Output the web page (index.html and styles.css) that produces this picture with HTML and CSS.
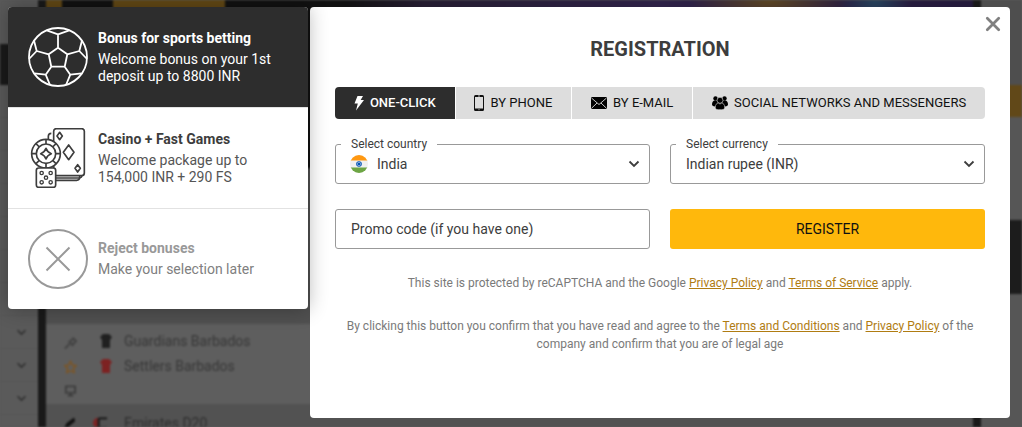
FILE: index.html
```html
<!DOCTYPE html>
<html lang="en">
<head>
<meta charset="utf-8">
<title>Registration</title>
<link rel="stylesheet" href="styles.css">
</head>
<body>
<svg class="sprite" aria-hidden="true">
  <symbol id="chevron" viewBox="0 0 12 8"><path d="M1.500 1.500 6 6l4.500-4.500" fill="none" stroke="currentColor" stroke-width="1.800"/></symbol>
  <symbol id="shirt" viewBox="0 0 12 16"><path d="M3 1h6l3 3-2 3v8H2V7L0 4z" fill="currentColor"/></symbol>
</svg>

<div class="page" aria-hidden="true">
  <div class="page-menu">
    <div class="menu-head"></div>
    <div class="menu-band"></div>
    <div class="menu-row"></div><div class="menu-row"></div><div class="menu-row"></div>
    <div class="menu-row"></div><div class="menu-row"></div><div class="menu-row"></div>
    <div class="menu-row"></div>
    <div class="menu-row"><svg><use href="#chevron"/></svg></div>
    <div class="menu-row"><svg><use href="#chevron"/></svg></div>
    <div class="menu-row"><svg><use href="#chevron"/></svg></div>
    <div class="menu-row"></div>
  </div>
  <div class="page-main">
    <div class="banner">
      <div class="banner-tag"></div>
      <div class="banner-button"></div>
      <div class="banner-art"></div>
    </div>
    <div class="league"></div>
    <div class="match">
      <div class="match-tools">
        <svg viewBox="0 0 14 14"><path d="M1 13l5-5M5 5l5 5M6 6l4-4 3 3-4 4" fill="none" stroke="#404040" stroke-width="2"/></svg>
        <svg viewBox="0 0 14 14"><path d="M7 1l2 4 4 .500-3 3 1 4.500-4-2-4 2 1-4.500-3-3L5 5z" fill="none" stroke="#80551f" stroke-width="1.500"/></svg>
        <svg viewBox="0 0 14 14"><path d="M2 2h10v7H2zM7 9v3M4 12h6" fill="none" stroke="#333" stroke-width="1.500"/></svg>
      </div>
      <div class="teams">
        <div class="team"><svg class="shirt-dark"><use href="#shirt"/></svg>Guardians Barbados</div>
        <div class="team"><svg class="shirt-red"><use href="#shirt"/></svg>Settlers Barbados</div>
      </div>
    </div>
    <div class="league-next">
      <svg viewBox="0 0 16 14"><path d="M1 14l4-7 8-6 1 4-7 6z" fill="#111"/></svg>
      <svg viewBox="0 0 16 14"><path d="M5 1v12Q0 11 0 7t5-6z" fill="#7d2222"/><path d="M6 2h9M6 2v10h9" stroke="#111" stroke-width="2" fill="none"/></svg>
      Emirates D20
    </div>
  </div>
  <div class="page-side">
    <div class="side-top"></div>
    <div class="side-button"></div>
    <div class="side-text"></div>
    <div class="side-band"></div>
  </div>
</div>

<div class="modal">
  <div class="bonuses">
    <button type="button" class="bonus bonus-active">
      <svg class="bonus-icon" viewBox="0 0 60 60" fill="none" stroke="#fff" stroke-width="1.800" stroke-linejoin="round">
        <circle cx="30" cy="30" r="29"/>
        <path d="M30 20.700l9.300 6.600-2.600 12.400H23.300l-2.600-12.400zM30 20.700V7.300M18.700 3.300 30 7.300l11.300-4M20.700 27.300 8.700 24M6 13.500 8.700 24l-7.700 8M39.300 27.300l12-3.300M54 13.500 51.300 24l7.700 8M23.300 39.700l-5.600 8M6.300 46.300l11.400 1.400L22 58M36.700 39.700l5.600 8M53.700 46.300l-11.400 1.400L38 58"/>
      </svg>
      <span class="bonus-text"><strong>Bonus for sports betting</strong><span>Welcome bonus on your 1st deposit up to 8800 INR</span></span>
    </button>
    <button type="button" class="bonus">
      <svg class="bonus-icon" viewBox="84 69 180 180" fill="#fff" stroke="#3d3d3d" stroke-width="5" stroke-linejoin="round">
        <path d="M154 85q-9 0-9 9v123q0 9 9 9h76q9 0 9-9v-6"/>
        <path d="M150 212v7h88q8 0 8-8" fill="none" stroke-width="4"/>
        <rect x="161" y="71" width="92" height="141" rx="8"/>
        <path d="M206 120l16 22-16 22-16-22zM179 82l8 11-8 11-8-11zM233 179l8 11-8 11-8-11z"/>
        <circle cx="138" cy="146" r="43"/>
        <circle cx="138" cy="146" r="29"/>
        <path d="M138 130q4 12 16 16-12 4-16 16-4-12-16-16 12-4 16-16zM138 103v14M138 175v14M95 146h14M167 146h14M108 116l10 10M158 166l10 10M108 176l10-10M158 126l10-10"/>
        <rect x="109" y="189" width="58" height="58" rx="7"/>
        <g stroke-width="4"><circle cx="125" cy="204" r="5"/><circle cx="152" cy="204" r="5"/><circle cx="138" cy="218" r="5"/><circle cx="125" cy="232" r="5"/><circle cx="152" cy="232" r="5"/></g>
      </svg>
      <span class="bonus-text"><strong>Casino + Fast Games</strong><span>Welcome package up to 154,000 INR + 290 FS</span></span>
    </button>
    <button type="button" class="bonus bonus-reject">
      <svg class="bonus-icon" viewBox="0 0 60 60" fill="none" stroke="#999" stroke-width="2">
        <circle cx="30" cy="30" r="29"/><path d="M18.500 18.500l23 23M41.500 18.500l-23 23"/>
      </svg>
      <span class="bonus-text"><strong>Reject bonuses</strong><span>Make your selection later</span></span>
    </button>
  </div>

  <form class="dialog">
    <button type="button" class="close" aria-label="Close"><svg viewBox="0 0 14 14"><path d="M2 2l10 10M12 2 2 12" stroke="#808080" stroke-width="2.400" stroke-linecap="round"/></svg></button>
    <h1>REGISTRATION</h1>
    <div class="tabs">
      <button type="button" class="tab tab-active">
        <svg width="10" height="16" viewBox="0 0 10 16"><path d="M3.500 1H9L6.700 5H10L2 15.500 3.800 8.500H.500z" fill="currentColor"/></svg>
        <span>ONE-CLICK</span></button>
      <button type="button" class="tab">
        <svg width="10" height="16" viewBox="0 0 10 16"><rect width="10" height="16" rx="1.500" fill="#111"/><path d="M1 2h8v11.500H1z" fill="#ddd"/><path d="M4 1h2M4.500 14.700h1" stroke="#ddd" stroke-width=".800"/></svg>
        <span>BY PHONE</span></button>
      <button type="button" class="tab">
        <svg width="16" height="12" viewBox="0 0 16 12"><rect width="16" height="12" rx="1" fill="#000"/><path d="M.500 1 8 7.500 15.500 1M.500 11.300 6 6M15.500 11.300 10 6" fill="none" stroke="#ddd" stroke-width=".900"/></svg>
        <span>BY E-MAIL</span></button>
      <button type="button" class="tab">
        <svg width="16" height="14" viewBox="0 0 16 14"><circle cx="3.500" cy="2.500" r="2.200"/><circle cx="12.500" cy="2.500" r="2.200"/><path d="M0 8.500C0 6 1.300 4.600 3 4.600h10c1.700 0 3 1.400 3 3.900 0 1.300-1.500 1.900-3 1.900H3c-1.500 0-3-.600-3-1.900z"/><g stroke="#ddd" stroke-width=".600"><circle cx="8" cy="4.300" r="3"/><path d="M3.300 11.500c0-2.800 1.300-4.400 3-4.400L8 8l1.700-.900c1.700 0 3 1.600 3 4.400 0 1.500-1.500 2.200-3 2.200H6.300c-1.500 0-3-.700-3-2.200z"/></g></svg>
        <span>SOCIAL NETWORKS AND MESSENGERS</span></button>
    </div>

    <div class="fields">
      <div class="field">
        <label for="country">Select country</label>
        <svg class="flag" viewBox="0 0 18 18"><clipPath id="round"><circle cx="9" cy="9" r="9"/></clipPath><g clip-path="url(#round)"><path d="M0 0h18v18H0z" fill="#f0f0f0"/><path d="M0 0h18v5.500H0z" fill="#ff9811"/><path d="M0 12.500h18V18H0z" fill="#6da544"/></g><circle cx="9" cy="9" r="2.800" fill="#0052b4"/><circle cx="9" cy="9" r="1.900" fill="#a9c4e5"/><circle cx="9" cy="9" r="1.300" fill="#0052b4"/></svg>
        <select id="country" class="with-flag"><option>India</option></select>
        <svg class="arrow"><use href="#chevron"/></svg>
      </div>
      <div class="field">
        <label for="currency">Select currency</label>
        <select id="currency"><option>Indian rupee (INR)</option></select>
        <svg class="arrow"><use href="#chevron"/></svg>
      </div>
      <div class="field"><input type="text" aria-label="Promo code" placeholder="Promo code (if you have one)"></div>
      <button type="submit" class="register">REGISTER</button>
    </div>

    <p class="note">This site is protected by reCAPTCHA and the Google <a href="#privacy">Privacy Policy</a> and <a href="#service">Terms of Service</a> apply.</p>
    <p class="note">By clicking this button you confirm that you have read and agree to the <a href="#terms">Terms and Conditions</a> and <a href="#company-privacy">Privacy Policy</a> of the company and confirm that you are of legal age</p>
  </form>
</div>
</body>
</html>
```
FILE: styles.css
```css
* { box-sizing: border-box; }
body {
  margin: 0;
  min-height: 100vh;
  overflow: hidden;
  background: #5a5a5a;
  color: #3d3d3d;
  font: 14px/18px Roboto, "Liberation Sans", sans-serif;
}
button, input, select { font: inherit; color: inherit; }
button { border: 0; padding: 0; background: none; cursor: pointer; }
.sprite { display: none; }

/* Dimmed page under the dialogs */
.page {
  position: absolute;
  inset: 0;
  display: flex;
  gap: 8px;
  overflow: hidden;
  background: #191919;
  filter: blur(1px);
}
.page-menu { flex: 0 0 38px; background: #5a5a5a; }
.menu-head { height: 44px; }
.menu-band { height: 41px; background: #1a1a1a; }
.menu-row { display: flex; align-items: center; justify-content: flex-end; height: 33px; padding-right: 11px; border-bottom: 1px solid #555; }
.menu-row svg { width: 11px; height: 7px; color: #2c2c2c; }
.page-main { flex: 1; display: flex; flex-direction: column; background: #505050; }
.page-main > div { flex: none; }
.banner { display: flex; height: 168px; background: #111; }
.banner-tag { width: 16px; height: 24px; background: #634915; }
.banner-button { width: 112px; height: 24px; margin-left: 51px; background: #634915; }
.banner-art { flex: 1; margin-left: 120px; background: radial-gradient(circle at 530px 0, #25415a, transparent 36px), radial-gradient(ellipse at 425px 0, #5a4420, transparent 80px), linear-gradient(90deg, #111, #241c30 80px, #2d2146 50%, #241a3b); }
.league { height: 156px; background: #505050; }
.match { display: flex; gap: 32px; height: 80px; padding: 4px 18px; background: #5e5e5e; }
.match-tools { display: flex; flex-direction: column; gap: 10px; width: 14px; padding-top: 8px; }
.match-tools svg { flex: none; width: 13px; height: 14px; }
.teams { color: #373737; }
.team { display: flex; align-items: center; gap: 12px; height: 25px; padding-left: 4px; }
.teams { margin-left: -16px; padding-left: 2px; }
.team svg { width: 12px; height: 16px; }
.shirt-dark { color: #202020; }
.shirt-red { color: #7d2222; }
.league-next { display: flex; align-items: center; gap: 16px; height: 38px; padding-left: 16px; background: #525252; color: #2e2e2e; }
.league-next svg { width: 15px; height: 14px; }
.page-side { flex: 0 0 41px; background: #565656; }
.side-top { height: 85px; background: #4e4e4e; }
.side-button { height: 32px; background: #614818; }
.side-text { height: 103px; }
.side-band { height: 74px; background: #1c1c1c; }

/* Dialogs */
.modal { position: relative; display: flex; align-items: flex-start; gap: 2px; padding: 7px 12px 9px 8px; }
.bonuses { position: relative; z-index: 1; flex: 0 0 300px; border-radius: 4px; background: #fff; box-shadow: 0 0 20px rgba(0, 0, 0, .3); overflow: hidden; }
.bonus { display: flex; align-items: center; gap: 10px; width: 100%; min-height: 100px; padding: 20px; text-align: left; }
.bonus + .bonus { border-top: 1px solid #e2e2e2; }
.bonus-icon { flex: none; width: 60px; height: 60px; }
.bonus-text { display: flex; flex-direction: column; gap: 4px; color: #555; line-height: 17px; }
.bonus-text strong { color: #3d3d3d; }
.bonus-active { background: #2d2d2d; }
.bonus-active .bonus-text, .bonus-active strong { color: #fff; }
.bonus-reject .bonus-text { color: #808080; }
.bonus-reject strong { color: #999; }

.dialog { position: relative; flex: 1; padding: 32px 25px 65px; border-radius: 4px; background: #fff; }
.close { position: absolute; top: 9px; right: 9px; width: 16px; height: 16px; }
.close svg { display: block; width: 16px; height: 16px; }
h1 { margin: 0 0 28px; font-size: 20px; line-height: 20px; font-weight: 700; text-align: center; }
.tabs { display: flex; gap: 1px; border-radius: 4px; overflow: hidden; }
.tab { flex: 1 1 auto; display: flex; align-items: center; justify-content: center; gap: 6px; height: 32px; background: #ddd; color: #111; font-size: 13px; }
.tab-active { background: #2d2d2d; color: #fff; font-weight: 500; }
.fields { display: grid; grid-template-columns: 1fr 1fr; gap: 25px 20px; margin: 25px 0; }
.field { position: relative; height: 40px; border: 1px solid #999; border-radius: 3px; }
.field label { position: absolute; top: -9px; left: 5px; padding: 0 10px; background: #fff; font-size: 12px; line-height: 16px; }
.field select, .field input { width: 100%; height: 100%; padding: 0 15px; border: 0; background: none; appearance: none; }
.field .with-flag { padding-left: 41px; }
.field input::placeholder { color: #3d3d3d; opacity: 1; }
.flag { position: absolute; top: 10px; left: 14px; width: 18px; height: 18px; }
.arrow { position: absolute; top: 15px; right: 9px; width: 12px; height: 8px; pointer-events: none; }
.register { height: 40px; border-radius: 3px; background: #ffb80c; color: #111; }
.note { margin: 0 0 25px; padding: 0 10px; color: #7a7a7a; font-size: 12px; line-height: 18px; text-align: center; }
.note:last-child { margin: 0; }
.note a { color: #b07c12; }
```
